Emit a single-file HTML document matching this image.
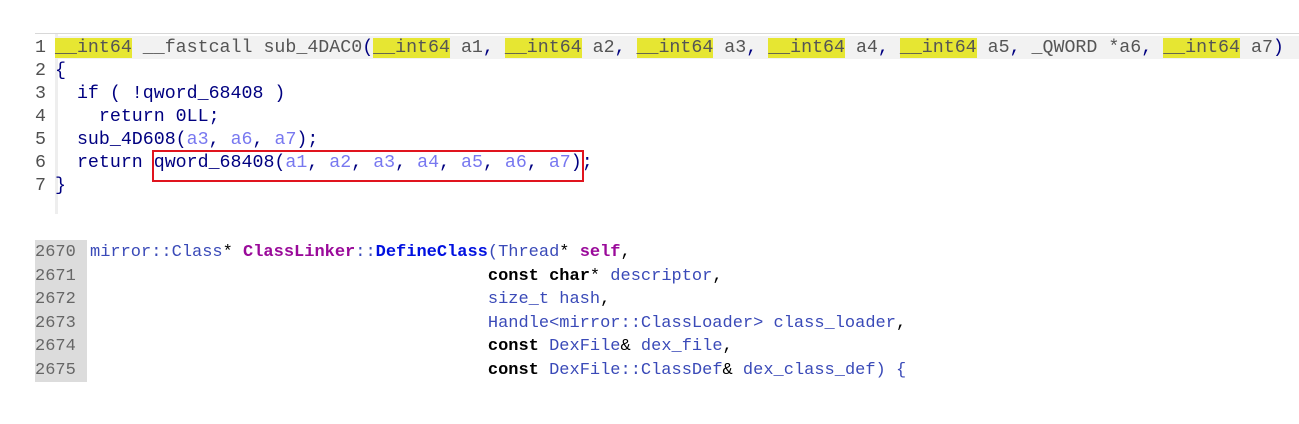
<!DOCTYPE html>
<html><head><meta charset="utf-8"><style>
html,body{margin:0;padding:0;background:#fff;width:1299px;height:424px;overflow:hidden}
.top{position:absolute;left:35px;top:35px;font-family:"Liberation Mono",monospace;font-size:18.3px;}
.topline{position:absolute;left:35px;top:33px;width:1264px;height:1px;background:#d8d8d8}
.gut{position:absolute;left:55px;top:34px;width:3px;height:180px;background:#eeeeee}
.l{position:absolute;left:0;height:23px;line-height:23px;white-space:pre;color:#000080}
.n{display:inline-block;width:20px;color:#505050}
.y{background:#e6e632;color:#555}
.g{color:#555}
.a{color:#7878f0}
.row1{position:absolute;left:58px;top:36px;width:1241px;height:23px;background:#f2f2f2}
.box{position:absolute;left:152px;top:150px;width:428px;height:28px;border:2px solid #e0141e}
.bot{position:absolute;left:35px;top:241px;font-family:"Liberation Mono",monospace;font-size:17px;}
.bg{position:absolute;left:35px;top:240px;width:52px;height:142px;background:#dcdcdc}
.b{position:absolute;left:0;height:23.5px;line-height:23.5px;white-space:pre;color:#3a4ab8}
.bn{display:inline-block;width:55px;color:#666}
.k{color:#000;font-weight:bold}
.p{color:#9a0a9a;font-weight:bold}
.f{color:#0010e0;font-weight:bold}
.bk{color:#000}
</style></head><body>
<div class="topline"></div>
<div class="row1"></div>
<div class="gut"></div>
<div class="top">
<div class="l" style="top:2px"><span class="n">1</span><span class="y">__int64</span><span class="g"> __fastcall sub_4DAC0</span>(<span class="y">__int64</span><span class="g"> a1</span>, <span class="y">__int64</span><span class="g"> a2</span>, <span class="y">__int64</span><span class="g"> a3</span>, <span class="y">__int64</span><span class="g"> a4</span>, <span class="y">__int64</span><span class="g"> a5</span>, <span class="g">_QWORD *a6</span>, <span class="y">__int64</span><span class="g"> a7</span>)</div>
<div class="l" style="top:25px"><span class="n">2</span>{</div>
<div class="l" style="top:48px"><span class="n">3</span>  if ( !qword_68408 )</div>
<div class="l" style="top:71px"><span class="n">4</span>    return 0LL;</div>
<div class="l" style="top:94px"><span class="n">5</span>  sub_4D608(<span class="a">a3</span>, <span class="a">a6</span>, <span class="a">a7</span>);</div>
<div class="l" style="top:117px"><span class="n">6</span>  return qword_68408(<span class="a">a1</span>, <span class="a">a2</span>, <span class="a">a3</span>, <span class="a">a4</span>, <span class="a">a5</span>, <span class="a">a6</span>, <span class="a">a7</span>);</div>
<div class="l" style="top:140px"><span class="n">7</span>}</div>
</div>
<div class="box"></div>
<div class="bg"></div>
<div class="bot">
<div class="b" style="top:0"><span class="bn">2670</span>mirror::Class<span class="bk">*</span> <span class="p">ClassLinker</span>::<span class="f">DefineClass</span>(Thread<span class="bk">*</span> <span class="p">self</span><span class="bk">,</span></div>
<div class="b" style="top:23.5px"><span class="bn">2671</span>                                       <span class="k">const char</span><span class="bk">*</span> descriptor<span class="bk">,</span></div>
<div class="b" style="top:47px"><span class="bn">2672</span>                                       size_t hash<span class="bk">,</span></div>
<div class="b" style="top:70.5px"><span class="bn">2673</span>                                       Handle&lt;mirror::ClassLoader&gt; class_loader<span class="bk">,</span></div>
<div class="b" style="top:94px"><span class="bn">2674</span>                                       <span class="k">const</span> DexFile<span class="bk">&amp;</span> dex_file<span class="bk">,</span></div>
<div class="b" style="top:117.5px"><span class="bn">2675</span>                                       <span class="k">const</span> DexFile::ClassDef<span class="bk">&amp;</span> dex_class_def) {</div>
</div>
</body></html>
